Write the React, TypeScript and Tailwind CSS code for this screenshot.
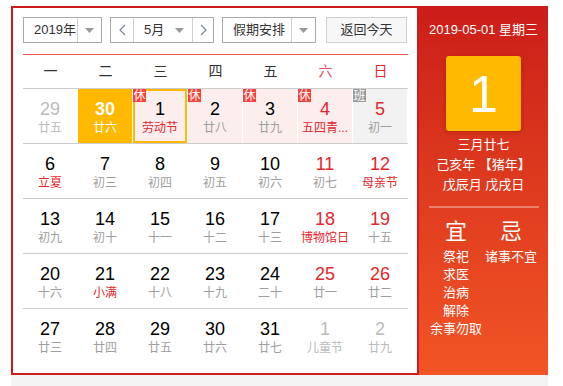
import React from "react";

type Day = {
  n: number;
  lunar: string;
  out?: boolean;
  redNum?: boolean;
  redLunar?: boolean;
  tag?: "休" | "班";
  today?: boolean;
  selected?: boolean;
};

const weeks: Day[][] = [
  [
    { n: 29, lunar: "廿五", out: true },
    { n: 30, lunar: "廿六", today: true },
    { n: 1, lunar: "劳动节", redLunar: true, tag: "休", selected: true },
    { n: 2, lunar: "廿八", tag: "休" },
    { n: 3, lunar: "廿九", tag: "休" },
    { n: 4, lunar: "五四青...", redNum: true, redLunar: true, tag: "休" },
    { n: 5, lunar: "初一", redNum: true, tag: "班" },
  ],
  [
    { n: 6, lunar: "立夏", redLunar: true },
    { n: 7, lunar: "初三" },
    { n: 8, lunar: "初四" },
    { n: 9, lunar: "初五" },
    { n: 10, lunar: "初六" },
    { n: 11, lunar: "初七", redNum: true },
    { n: 12, lunar: "母亲节", redNum: true, redLunar: true },
  ],
  [
    { n: 13, lunar: "初九" },
    { n: 14, lunar: "初十" },
    { n: 15, lunar: "十一" },
    { n: 16, lunar: "十二" },
    { n: 17, lunar: "十三" },
    { n: 18, lunar: "博物馆日", redNum: true, redLunar: true },
    { n: 19, lunar: "十五", redNum: true },
  ],
  [
    { n: 20, lunar: "十六" },
    { n: 21, lunar: "小满", redLunar: true },
    { n: 22, lunar: "十八" },
    { n: 23, lunar: "十九" },
    { n: 24, lunar: "二十" },
    { n: 25, lunar: "廿一", redNum: true },
    { n: 26, lunar: "廿二", redNum: true },
  ],
  [
    { n: 27, lunar: "廿三" },
    { n: 28, lunar: "廿四" },
    { n: 29, lunar: "廿五" },
    { n: 30, lunar: "廿六" },
    { n: 31, lunar: "廿七" },
    { n: 1, lunar: "儿童节", out: true },
    { n: 2, lunar: "廿九", out: true },
  ],
];

const weekdays = ["一", "二", "三", "四", "五", "六", "日"];

function Caret() {
  return (
    <svg width="9" height="5" viewBox="0 0 9 5">
      <path d="M0 0h9L4.5 5z" fill="#999" />
    </svg>
  );
}

function Chevron({ dir }: { dir: "left" | "right" }) {
  return (
    <svg width="7" height="12" viewBox="0 0 7 12">
      <polyline
        points={dir === "left" ? "6,1 1,6 6,11" : "1,1 6,6 1,11"}
        fill="none"
        stroke="#7a8599"
        strokeWidth="1.2"
      />
    </svg>
  );
}

function DayCell({ d }: { d: Day }) {
  let bg = "";
  if (d.today) bg = "bg-[#ffb900]";
  else if (d.tag === "休") bg = "bg-[#fdeeee]";
  else if (d.tag === "班") bg = "bg-[#f2f2f2]";

  let numColor = "text-black";
  let lunarColor = "text-[#9e9e9e]";
  if (d.out) {
    numColor = "text-[#bbbbbb]";
    lunarColor = "text-[#bbbbbb]";
  } else if (d.today) {
    numColor = "text-white font-bold";
    lunarColor = "text-white";
  } else {
    if (d.redNum) numColor = "text-[#e4262d]";
    if (d.redLunar) lunarColor = "text-[#e4262d]";
  }

  return (
    <div className="flex">
      <div
        className={`relative mr-px flex flex-1 flex-col items-center pt-[10px] ${bg} ${
          d.selected ? "shadow-[inset_0_0_0_2px_#ffb900]" : ""
        }`}
      >
        {d.tag ? (
          <span
            className={`absolute left-0 top-0 flex h-[13px] w-[13px] items-center justify-center text-[12px] leading-none text-white ${
              d.tag === "休" ? "bg-[#f4433b]" : "bg-[#9a9a9a]"
            }`}
          >
            {d.tag}
          </span>
        ) : null}
        <span className={`text-[18px] leading-[20px] ${numColor}`}>{d.n}</span>
        <span className={`mt-px whitespace-nowrap text-[12px] leading-[16px] ${lunarColor}`}>
          {d.lunar}
        </span>
      </div>
    </div>
  );
}

export default function App() {
  return (
    <div className="h-[386px] w-full bg-white font-['Liberation_Sans','Noto_Sans_CJK_SC',sans-serif]">
      <div className="ml-[11px] pt-[6px] w-[537px]">
        <div className="flex h-[369px]">
          {/* left: calendar */}
          <div className="w-[408px] border-2 border-[#cc1c1c] pl-[10px] pr-[9px] pt-[9px]">
            <div className="flex h-[26px] text-[13px] text-[#333]">
              <div className="flex w-[79px] border border-[#aaaaaa]">
                <span className="flex flex-1 items-center pl-[10px]">2019年</span>
                <span className="flex w-[24px] items-center justify-center border-l border-[#d0d0d0]">
                  <Caret />
                </span>
              </div>
              <div className="ml-[8px] flex w-[104px] border border-[#aaaaaa]">
                <span className="flex w-[22px] items-center justify-center">
                  <Chevron dir="left" />
                </span>
                <span className="flex w-[60px] items-center justify-between border-x border-[#d0d0d0] pl-[10px] pr-[8px]">
                  5月
                  <Caret />
                </span>
                <span className="flex flex-1 items-center justify-center">
                  <Chevron dir="right" />
                </span>
              </div>
              <div className="ml-[8px] flex w-[94px] border border-[#aaaaaa]">
                <span className="flex flex-1 items-center pl-[10px]">假期安排</span>
                <span className="flex w-[24px] items-center justify-center border-l border-[#d0d0d0]">
                  <Caret />
                </span>
              </div>
              <button className="ml-[10px] flex w-[81px] items-center justify-center border border-[#cfcfcf] bg-[#f7f7f7] text-[#333]">
                返回今天
              </button>
            </div>

            <div className="mt-[11px] h-px bg-[#f0574b]" />

            <div className="grid h-[34px] grid-cols-7 items-center border-b border-[#cccccc] text-[14px]">
              {weekdays.map((w, i) => (
                <span
                  key={w}
                  className={`text-center ${
                    i === 6 ? "text-[#e4262d]" : i === 5 ? "text-[#e8505a]" : "text-[#333]"
                  }`}
                >
                  {w}
                </span>
              ))}
            </div>

            {weeks.map((week, wi) => (
              <div
                key={wi}
                className={`grid h-[55px] grid-cols-7 ${
                  wi < weeks.length - 1 ? "border-b border-[#cccccc]" : ""
                }`}
              >
                {week.map((d, di) => (
                  <DayCell key={di} d={d} />
                ))}
              </div>
            ))}
          </div>

          {/* right: detail */}
          <div className="flex w-[129px] flex-col items-center bg-gradient-to-b from-[#cb1c19] to-[#f25425] pt-[15px] text-white">
            <div className="text-[13px] leading-[18px]">2019-05-01 星期三</div>
            <div className="mt-[17px] flex h-[75px] w-[75px] items-center justify-center rounded-[3px] bg-[#ffba00] text-[52px] leading-none shadow-[0_1px_4px_rgba(120,0,0,0.35)]">
              1
            </div>
            <div className="mt-[4px] text-center text-[13px] leading-[20px]">
              <div>三月廿七</div>
              <div>己亥年 【猪年】</div>
              <div>戊辰月 戊戌日</div>
            </div>
            <div className="mt-[11px] h-[2px] w-[110px] bg-white/35" />
            <div className="mt-[11px] grid w-[110px] grid-cols-2 text-center">
              <div className="flex flex-col items-center">
                <span className="text-[22px] leading-[26px]">宜</span>
                <div className="mt-[3px] text-[13px] leading-[18px]">
                  <div>祭祀</div>
                  <div>求医</div>
                  <div>治病</div>
                  <div>解除</div>
                  <div className="whitespace-nowrap">余事勿取</div>
                </div>
              </div>
              <div className="flex flex-col items-center">
                <span className="text-[22px] leading-[26px]">忌</span>
                <div className="mt-[3px] whitespace-nowrap text-[13px] leading-[18px]">诸事不宜</div>
              </div>
            </div>
          </div>
        </div>
        <div className="h-[11px] bg-[#f4f4f4]" />
      </div>
    </div>
  );
}
